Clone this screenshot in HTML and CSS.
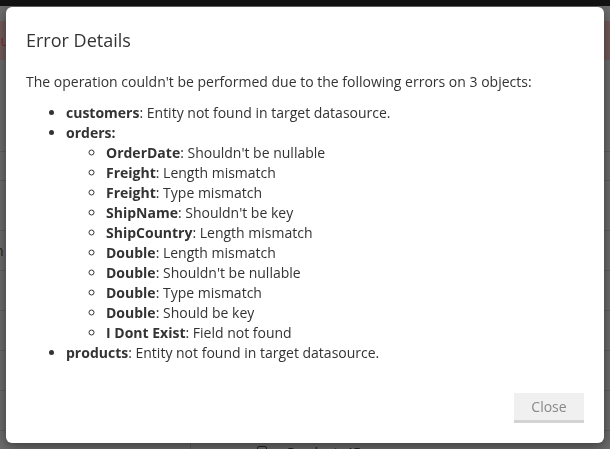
FILE: index.html
```html
<!DOCTYPE html>
<html>
<head>
<meta charset="utf-8">
<link rel="stylesheet" href="styles.css">
</head>
<body>
<div class="page">
  <div class="topbar"></div>
  <div class="gap"></div>
  <div class="alert"><span class="alert-text">lu</span></div>
  <div class="rows">
    <div class="row r1"><span class="cut">t</span></div>
    <div class="row r2"></div>
    <div class="row r3"></div>
    <div class="row r4"><span class="cut">n</span></div>
    <div class="row r4"></div>
    <div class="row r4"></div>
    <div class="row r4"></div>
    <div class="row r4"></div>
    <div class="row last">
      <span class="cell-a"></span>
      <span class="check"></span>
      <span class="prod">Products45</span>
    </div>
  </div>
</div>

<div class="modal">
  <div class="modal-header">
    <h4 class="modal-title">Error Details</h4>
  </div>
  <div class="modal-body">
    <p class="intro">The operation couldn't be performed due to the following errors on 3 objects:</p>
    <ul class="errors">
      <li><b>customers</b>: Entity not found in target datasource.</li>
      <li><b>orders:</b>
        <ul class="sub">
          <li><b>OrderDate</b>: Shouldn't be nullable</li>
          <li><b>Freight</b>: Length mismatch</li>
          <li><b>Freight</b>: Type mismatch</li>
          <li><b>ShipName</b>: Shouldn't be key</li>
          <li><b>ShipCountry</b>: Length mismatch</li>
          <li><b>Double</b>: Length mismatch</li>
          <li><b>Double</b>: Shouldn't be nullable</li>
          <li><b>Double</b>: Type mismatch</li>
          <li><b>Double</b>: Should be key</li>
          <li><b>I Dont Exist</b>: Field not found</li>
        </ul>
      </li>
      <li><b>products</b>: Entity not found in target datasource.</li>
    </ul>
  </div>
  <div class="modal-footer">
    <button class="btn-close">Close</button>
  </div>
</div>
</body>
</html>
```

FILE: styles.css
```css
html, body {
  margin: 0;
  padding: 0;
  height: 100%;
  overflow: hidden;
}
body {
  background: #6b6b6b;
  font-family: "Open Sans", "Liberation Sans", sans-serif;
  color: #333;
}
.page {
  display: flex;
  flex-direction: column;
  height: 449px;
  overflow: hidden;
}
.topbar {
  height: 6px;
  background: #131313;
  flex: none;
}
.gap {
  height: 15px;
  background: #6d6d6d;
  flex: none;
}
.alert {
  height: 39px;
  flex: none;
  background: #725a5a;
  display: flex;
  align-items: center;
  font-size: 14px;
  color: #7c2e2e;
}
.alert-text {
  margin-left: -3px;
}
.rows {
  display: flex;
  flex-direction: column;
}
.row {
  flex: none;
  border-bottom: 1px solid #5e5e5e;
  display: flex;
  align-items: center;
  font-size: 14px;
  color: #222;
}
.r1 { height: 91px; }
.r2 { height: 28px; }
.r3 { height: 49px; }
.r4 { height: 39px; }
.cut { margin-left: -5px; }
.last {
  box-sizing: border-box;
  height: 18px;
  overflow: hidden;
  border-bottom: none;
  align-items: flex-start;
  padding-top: 13px;
}
.cell-a {
  width: 190px;
  height: 18px;
  border-right: 1px solid #5e5e5e;
  margin-top: -13px;
}
.check {
  width: 8px;
  height: 8px;
  border: 1px solid #222;
  border-radius: 2px;
  margin-left: 66px;
  margin-top: 2px;
}
.prod {
  margin-left: 20px;
  color: #222;
  line-height: 18px;
}

.modal {
  position: fixed;
  left: 6px;
  top: 7px;
  width: 598px;
  height: 436px;
  box-sizing: border-box;
  background: #fff;
  border-radius: 6px;
  box-shadow: 0 3px 12px rgba(0, 0, 0, 0.45);
  display: flex;
  flex-direction: column;
  padding: 23px 20px 20px 20px;
}
.modal-title {
  margin: 0;
  font-size: 18px;
  line-height: 20px;
  font-weight: 400;
  color: #333;
}
.modal-body {
  padding-top: 22px;
  font-size: 14px;
  line-height: 20px;
}
.intro {
  margin: 0 0 11px 0;
}
.errors {
  margin: 0;
  padding-left: 40px;
  list-style: disc;
}
.sub {
  margin: 0;
  padding-left: 40px;
  list-style: circle;
}
.errors b {
  font-weight: 700;
}
.modal-footer {
  margin-top: auto;
  display: flex;
  justify-content: flex-end;
}
.btn-close {
  width: 70px;
  height: 30px;
  box-sizing: border-box;
  border: none;
  border-bottom: 3px solid #d3d3d3;
  background: #f0f0f0;
  color: #888;
  font-family: "Open Sans", "Liberation Sans", sans-serif;
  font-size: 14px;
  padding: 0;
  line-height: 27px;
}
```
